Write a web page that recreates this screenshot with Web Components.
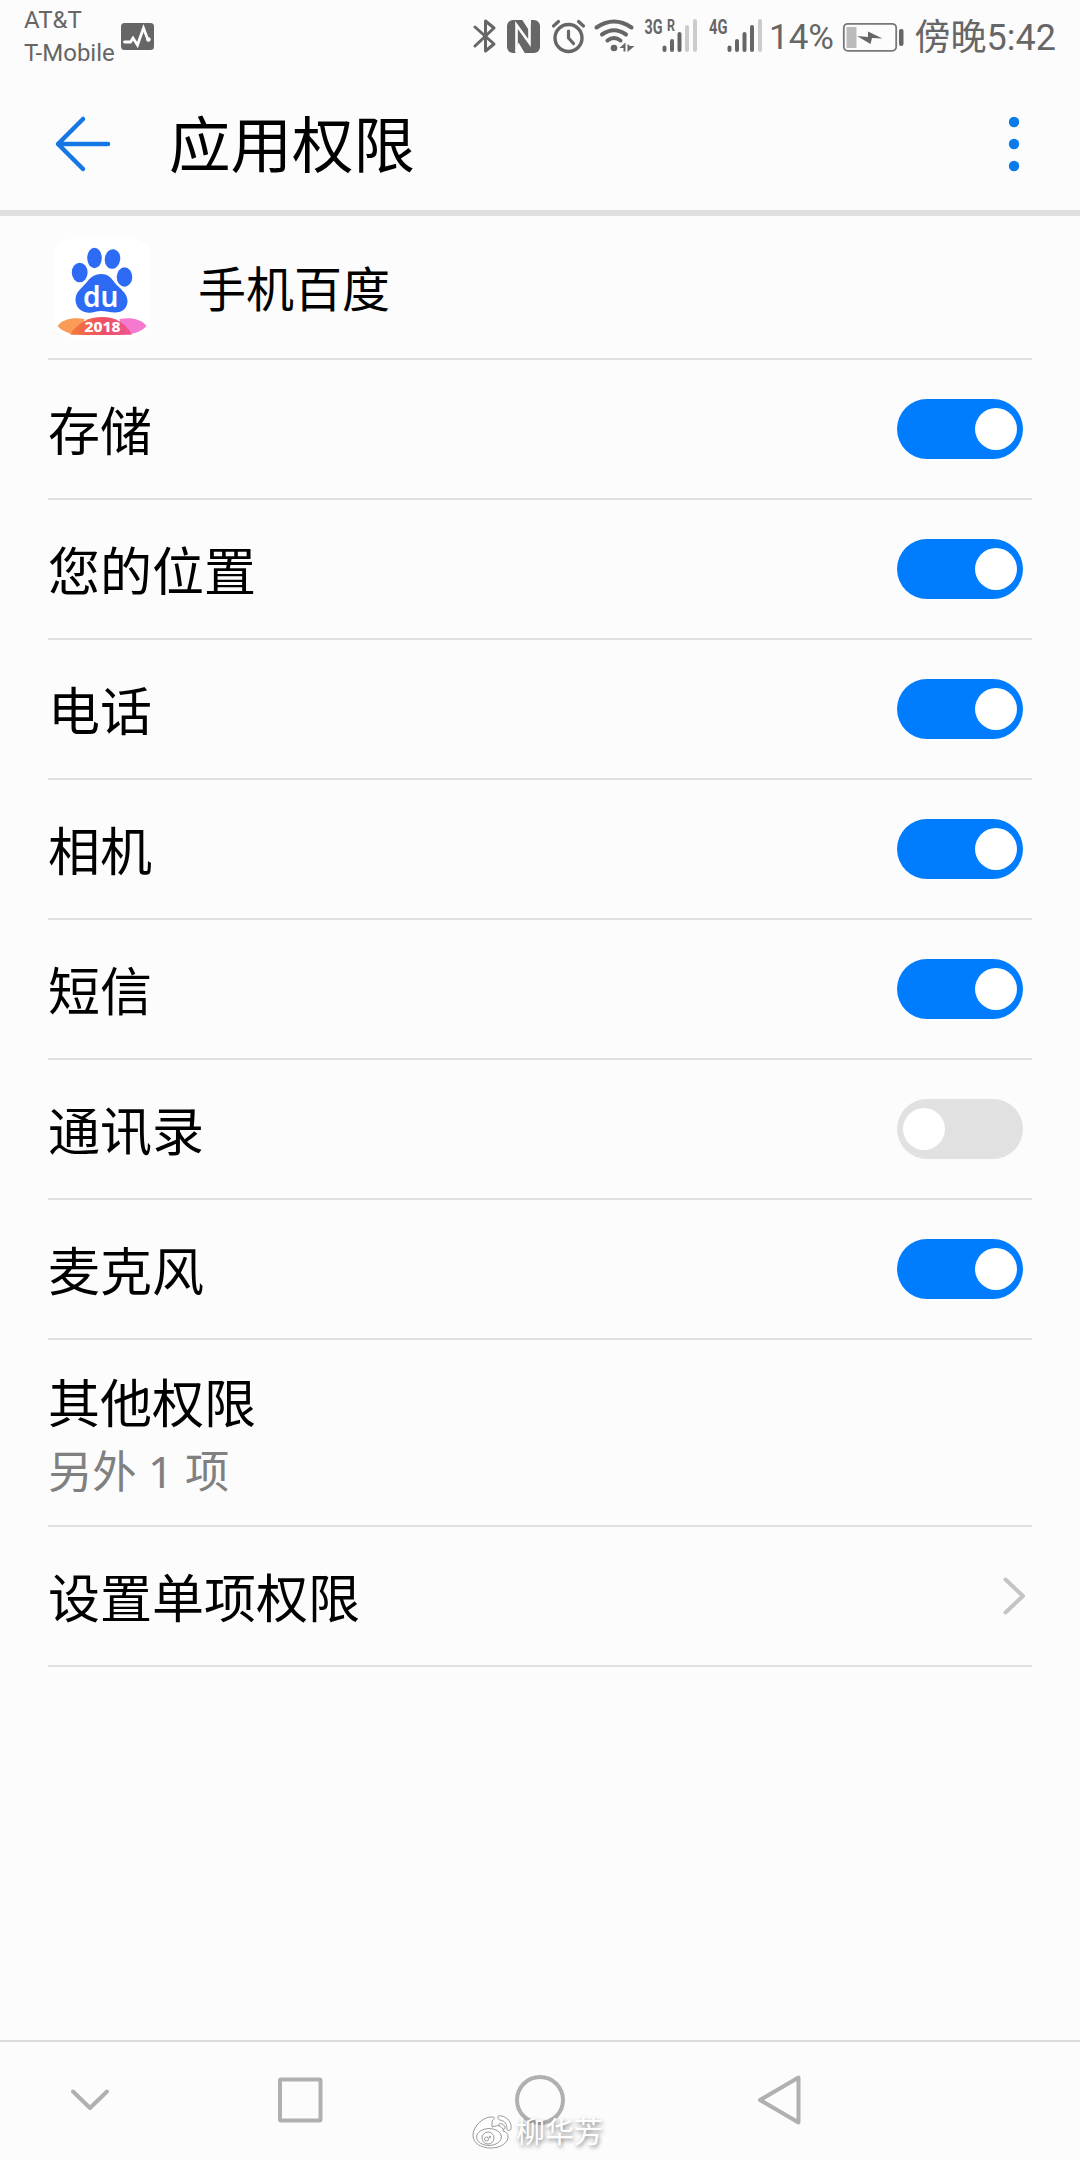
<!DOCTYPE html>
<html lang="zh-CN">
<head>
<meta charset="utf-8">
<title>应用权限</title>
<style>
    body {
        margin: 0;
        background: #fcfcfc;
        font-family: Roboto, "Noto Sans CJK SC", sans-serif;
        color: #000;
    }
</style>
</head>
<body>
<app-pantalla>
    <barra-estado slot="estado"></barra-estado>
    <barra-titulo slot="titulo">应用权限</barra-titulo>
    <fila-app>手机百度</fila-app>
    <fila-permiso activo>存储</fila-permiso>
    <fila-permiso activo>您的位置</fila-permiso>
    <fila-permiso activo>电话</fila-permiso>
    <fila-permiso activo>相机</fila-permiso>
    <fila-permiso activo>短信</fila-permiso>
    <fila-permiso>通讯录</fila-permiso>
    <fila-permiso activo>麦克风</fila-permiso>
    <fila-detalle>其他权限<span slot="detalle">另外 1 项</span></fila-detalle>
    <fila-enlace>设置单项权限</fila-enlace>
    <barra-navegacion slot="navegacion"></barra-navegacion>
    <marca-agua slot="marca">柳华芳</marca-agua>
</app-pantalla>

<script>
// Clase base: crea el shadow root con la plantilla de cada elemento
class Elemento extends HTMLElement {
    constructor() {
        super();
        this.attachShadow({ mode: 'open' });
        this.shadowRoot.innerHTML = this.plantilla();
    }
}

class AppPantalla extends Elemento {
    plantilla() {
        return `
            <style>
                :host {
                    display: flex;
                    flex-direction: column;
                    position: relative;
                    width: 1080px;
                    height: 2160px;
                    overflow: hidden;
                }
                main { flex: 1; padding: 0 48px; }
            </style>
            <slot name="estado"></slot>
            <slot name="titulo"></slot>
            <main><slot></slot></main>
            <slot name="navegacion"></slot>
            <slot name="marca"></slot>
        `;
    }
}

class BarraEstado extends Elemento {
    plantilla() {
        return `
            <style>
                :host {
                    display: flex;
                    justify-content: space-between;
                    height: 72px;
                    box-sizing: border-box;
                    padding: 0 24px;
                    color: #666;
                    white-space: nowrap;
                }
                svg { display: block; flex: none; }
                .operadores { display: flex; font-size: 24px; line-height: 33px; }
                .nombres { width: 97px; padding-top: 4px; }
                .iconos { display: flex; width: 588px; }
                .bateria { width: 74px; font-size: 35px; line-height: 72px; padding-top: 2px; }
                .hora { font-size: 36px; line-height: 72px; padding-top: 2px; }
                text { font-family: Roboto, sans-serif; font-weight: 700; fill: #666; }
            </style>
            <div class="operadores">
                <div class="nombres"><div>AT&amp;T</div><div>T-Mobile</div></div>
                <svg width="34" height="72" viewBox="121 0 34 72">
                    <rect x="121" y="23" width="33" height="27" rx="3.5" fill="#666"/>
                    <path d="M124.500 42h6l2.500-4 4.500 7 6-17 4.500 12" fill="none" stroke="#fff" stroke-width="2.800" stroke-linecap="round"/>
                    <circle cx="148.500" cy="39.500" r="2.200" fill="#fff"/>
                </svg>
            </div>
            <div class="iconos">
                <!-- bluetooth -->
                <svg width="34" height="72" viewBox="468 0 34 72">
                    <path d="M475 27l19 17-8.500 7V21l8.500 7-19 18" fill="none" stroke="#666" stroke-width="3" stroke-linecap="round" stroke-linejoin="round"/>
                </svg>
                <!-- nfc -->
                <svg width="44" height="72" viewBox="502 0 44 72">
                    <rect x="507" y="20" width="33" height="33" rx="6" fill="#666"/>
                    <path d="M516.500 52V25l13 18V21" fill="none" stroke="#fcfcfc" stroke-width="2.600"/>
                    <path d="M522 19.500h9v3l-2 8zM525 53.500h-9.500v-3l3-8z" fill="#fcfcfc"/>
                </svg>
                <!-- alarma -->
                <svg width="46" height="72" viewBox="546 0 46 72" fill="none" stroke="#666" stroke-linecap="round">
                    <circle cx="568.500" cy="38" r="13.500" stroke-width="3.400"/>
                    <path d="M568.500 31v7l5 5.500" stroke-width="3.200"/>
                    <path d="M553.500 26l5-4.500M578.500 21.500l5 4.500" stroke-width="3.200"/>
                </svg>
                <!-- wifi -->
                <svg width="48" height="72" viewBox="592 0 48 72" fill="none" stroke="#666" stroke-linecap="round" stroke-width="4">
                    <path d="M596.500 27.500q17.500-12 35 0M602 34.500q12-8.500 24 0M607.500 40.500q6.500-5 13 0"/>
                    <circle cx="614" cy="48" r="3.300" fill="#666" stroke="none"/>
                    <path d="M625.500 42.500v9h-2v-3.500h-4zM627.500 52V44l2.500 2h4.500z" fill="#666" stroke="none"/>
                </svg>
                <!-- señal 3G -->
                <svg width="64" height="72" viewBox="640 0 64 72" stroke-width="4" stroke-linecap="round">
                    <text x="644.500" y="34" font-size="20" textLength="18" lengthAdjust="spacingAndGlyphs">3G</text>
                    <text x="667" y="31" font-size="16.500" textLength="8" lengthAdjust="spacingAndGlyphs">R</text>
                    <path d="M664.500 47.500v2.500M672 41v9M679.500 34v16" stroke="#666"/>
                    <path d="M687 27v23M695 21v29" stroke="#ccc"/>
                </svg>
                <!-- señal 4G -->
                <svg width="65" height="72" viewBox="704 0 65 72" stroke-width="4" stroke-linecap="round">
                    <text x="709" y="34" font-size="20" textLength="18.500" lengthAdjust="spacingAndGlyphs">4G</text>
                    <path d="M729.500 47.500v2.500M737 41v9M744.500 34v16M752 27v23" stroke="#666"/>
                    <path d="M760 21v29" stroke="#ccc"/>
                </svg>
                <div class="bateria">14%</div>
                <svg width="73" height="72" viewBox="843 0 73 72">
                    <rect x="844.800" y="23.800" width="52.400" height="27" rx="4" fill="none" stroke="#777" stroke-width="1.800"/>
                    <rect x="847.500" y="27" width="10" height="21" fill="#bbb"/>
                    <path d="M858 36l11 1v-5.500l14.500 7-10.500-.5-1.500 6z" fill="#666"/>
                    <rect x="900" y="29" width="4.500" height="17" rx="2" fill="#666"/>
                </svg>
                <div class="hora">傍晚5:42</div>
            </div>
        `;
    }
}

class BarraTitulo extends Elemento {
    plantilla() {
        return `
            <style>
                :host {
                    display: flex;
                    align-items: center;
                    height: 144px;
                    box-sizing: border-box;
                    padding: 0 54px 0 54px;
                    border-bottom: 6px solid #e0e0e0;
                    font-size: 61.5px;
                }
                .titulo { flex: 1; margin-left: 57px; padding-top: 12px; line-height: 80px; }
                svg { display: block; }
                svg.volver, svg.menu { margin-top: 6px; }
            </style>
            <svg class="volver" width="58" height="60" viewBox="54 114 58 60">
                <path d="M83 119L58 144l25 25M58 144h50" fill="none" stroke="#1577e3" stroke-width="4.500" stroke-linecap="round" stroke-linejoin="round"/>
            </svg>
            <div class="titulo"><slot></slot></div>
            <svg class="menu" width="24" height="60" viewBox="1002 114 24 60" fill="#0b7be9">
                <circle cx="1014" cy="122" r="5.200"/>
                <circle cx="1014" cy="144" r="5.200"/>
                <circle cx="1014" cy="166" r="5.200"/>
            </svg>
        `;
    }
}

class FilaApp extends Elemento {
    plantilla() {
        return `
            <style>
                :host {
                    display: flex;
                    align-items: center;
                    height: 144px;
                    box-sizing: border-box;
                    border-bottom: 2px solid #e0e0e0;
                    font-size: 48px;
                }
                svg { display: block; margin: 2px 46px 0 4px; }
                .nombre { padding-bottom: 2px; }
            </style>
            <svg width="100" height="100" viewBox="52 239 100 100">
                <defs>
                    <linearGradient id="cinta">
                        <stop offset="0" stop-color="#f47a35"/>
                        <stop offset=".55" stop-color="#ef4f68"/>
                        <stop offset="1" stop-color="#f0588f"/>
                    </linearGradient>
                </defs>
                <rect x="53" y="240" width="97" height="98" rx="17" fill="#fff"/>
                <g fill="#2d6bf5">
                    <ellipse cx="79.700" cy="273.500" rx="7.900" ry="9.800"/>
                    <ellipse cx="94.500" cy="259" rx="7.300" ry="10.200"/>
                    <ellipse cx="112.500" cy="260" rx="7.700" ry="9.900" transform="rotate(8 112.500 260)"/>
                    <ellipse cx="124.500" cy="278" rx="7.800" ry="9.700"/>
                    <path d="M101 275c8 0 11 5 14 9 4 5 12.500 10 12.500 18 0 7-5 11.500-12.500 11.500-5 0-9-1.500-14-1.500s-9 2.500-14 1.500c-7-1-11.500-6-11.500-13 0-8 7.500-12.500 11.500-17.500 3-4 7-8 14-8z"/>
                </g>
                <text x="83" y="308" font-family="Noto Sans, sans-serif" font-size="29" font-weight="600" fill="#fff" textLength="35.500" lengthAdjust="spacingAndGlyphs">du</text>
                <path d="M57.500 327c5-7 16-9 27-7l-5 15.500c-10 0-17-3-22-8.500z" fill="#fa9c57"/>
                <path d="M146.500 327c-5-7-16-9-27-7l3 15.500c12 0 19-3 24-8.500z" fill="#f579cf"/>
                <path d="M70 335.500c8-12 19-17.500 32-17.500s23 5.500 30 17.500c-8 .8-54 .8-62 0z" fill="url(#cinta)"/>
                <text x="84.500" y="333" font-family="Noto Sans, sans-serif" font-size="14.500" font-weight="800" fill="#fff" textLength="36" lengthAdjust="spacingAndGlyphs">2018</text>
            </svg>
            <div class="nombre"><slot></slot></div>
        `;
    }
}

// Interruptor: azul si está activo, gris si no
class InterruptorPermiso extends Elemento {
    plantilla() {
        return `
            <style>
                :host {
                    display: flex;
                    align-items: center;
                    width: 126px;
                    height: 60px;
                    box-sizing: border-box;
                    padding: 0 6px;
                    border-radius: 30px;
                    background: #e1e1e1;
                }
                :host([activo]) { background: #007dff; justify-content: flex-end; }
                .bola { width: 42px; height: 42px; border-radius: 50%; background: #fff; }
            </style>
            <div class="bola"></div>
        `;
    }
}

class FilaPermiso extends Elemento {
    plantilla() {
        return `
            <style>
                :host {
                    display: flex;
                    align-items: center;
                    justify-content: space-between;
                    height: 140px;
                    box-sizing: border-box;
                    padding-right: 9px;
                    border-bottom: 2px solid #e0e0e0;
                    font-size: 52px;
                }
                .texto { padding-bottom: 2px; }
            </style>
            <div class="texto"><slot></slot></div>
            <interruptor-permiso></interruptor-permiso>
        `;
    }

    connectedCallback() {
        const interruptor = this.shadowRoot.querySelector('interruptor-permiso');
        interruptor.toggleAttribute('activo', this.hasAttribute('activo'));
    }
}

class FilaDetalle extends Elemento {
    plantilla() {
        return `
            <style>
                :host {
                    display: flex;
                    flex-direction: column;
                    height: 187px;
                    box-sizing: border-box;
                    padding-top: 33px;
                    border-bottom: 2px solid #e0e0e0;
                    font-size: 52px;
                }
                .texto { line-height: 66px; }
                .detalle {
                    font-family: "Noto Sans", "Noto Sans CJK SC", sans-serif;
                    font-size: 44.3px;
                    line-height: 64px;
                    color: #808080;
                }
            </style>
            <div class="texto"><slot></slot></div>
            <div class="detalle"><slot name="detalle"></slot></div>
        `;
    }
}

class FilaEnlace extends Elemento {
    plantilla() {
        return `
            <style>
                :host {
                    display: flex;
                    align-items: center;
                    justify-content: space-between;
                    height: 140px;
                    box-sizing: border-box;
                    padding-right: 6px;
                    border-bottom: 2px solid #e0e0e0;
                    font-size: 52px;
                }
                .texto { padding-bottom: 2px; }
                svg { display: block; }
            </style>
            <div class="texto"><slot></slot></div>
            <svg width="24" height="40" viewBox="0 0 24 40">
                <path d="M3.500 3.500L21 20 3.500 36.500" fill="none" stroke="#c4c4c4" stroke-width="4" stroke-linecap="round" stroke-linejoin="round"/>
            </svg>
        `;
    }
}

class BarraNavegacion extends Elemento {
    plantilla() {
        return `
            <style>
                :host {
                    display: flex;
                    align-items: center;
                    height: 120px;
                    box-sizing: border-box;
                    border-top: 2px solid #dcdcdc;
                }
                svg { display: block; flex: none; fill: none; stroke: #b0b0b0; stroke-width: 4; stroke-linejoin: round; }
            </style>
            <svg width="180" height="118" viewBox="0 2042 180 118"><path d="M73 2091.500l17 16.500 17-16.500" stroke-linecap="round"/></svg>
            <svg width="240" height="118" viewBox="180 2042 240 118"><rect x="280" y="2079.500" width="40.500" height="41" rx="1"/></svg>
            <svg width="240" height="118" viewBox="420 2042 240 118"><circle cx="540" cy="2100" r="23"/></svg>
            <svg width="240" height="118" viewBox="660 2042 240 118"><path d="M760 2100l38.500-22.500v45z"/></svg>
        `;
    }
}

// Marca sobre la barra de navegación
class MarcaAgua extends Elemento {
    plantilla() {
        return `
            <style>
                :host {
                    display: flex;
                    align-items: center;
                    gap: 1px;
                    position: absolute;
                    left: 471px;
                    top: 2113px;
                    font-size: 29px;
                    line-height: 40px;
                    color: #fff;
                    text-shadow: 1px 2px 4px rgba(0, 0, 0, .5);
                }
            </style>
            <svg width="44" height="40" viewBox="471 2113 44 40" fill="#fff" stroke="#999" stroke-width="1">
                <path d="M492 2121c3-3 4-4-2-4-8 1-17 10-17 18 0 9 9 13 18 13 11 0 17-6 17-11 0-4-2-5-5-6 1-5-2-7-11-4z"/>
                <ellipse cx="489" cy="2137" rx="12.500" ry="8.500"/>
                <circle cx="488" cy="2138" r="6"/>
                <circle cx="486.500" cy="2139" r="2"/>
                <circle cx="490" cy="2137" r=".8"/>
                <path d="M498 2118c0-2 1-3 3-2 7 1 11 7 10 13-1 2-4 2-4 0 0-5-2-8-7-9-1 0-2-1-2-2z"/>
                <path d="M499 2124c1-1 5 0 6 3 0 2-1 3-2 2-1-2-2-2-4-3z"/>
            </svg>
            <div><slot></slot></div>
        `;
    }
}

// Define los elementos en el navegador
customElements.define('interruptor-permiso', InterruptorPermiso);
customElements.define('app-pantalla', AppPantalla);
customElements.define('barra-estado', BarraEstado);
customElements.define('barra-titulo', BarraTitulo);
customElements.define('fila-app', FilaApp);
customElements.define('fila-permiso', FilaPermiso);
customElements.define('fila-detalle', FilaDetalle);
customElements.define('fila-enlace', FilaEnlace);
customElements.define('barra-navegacion', BarraNavegacion);
customElements.define('marca-agua', MarcaAgua);
</script>
</body>
</html>
